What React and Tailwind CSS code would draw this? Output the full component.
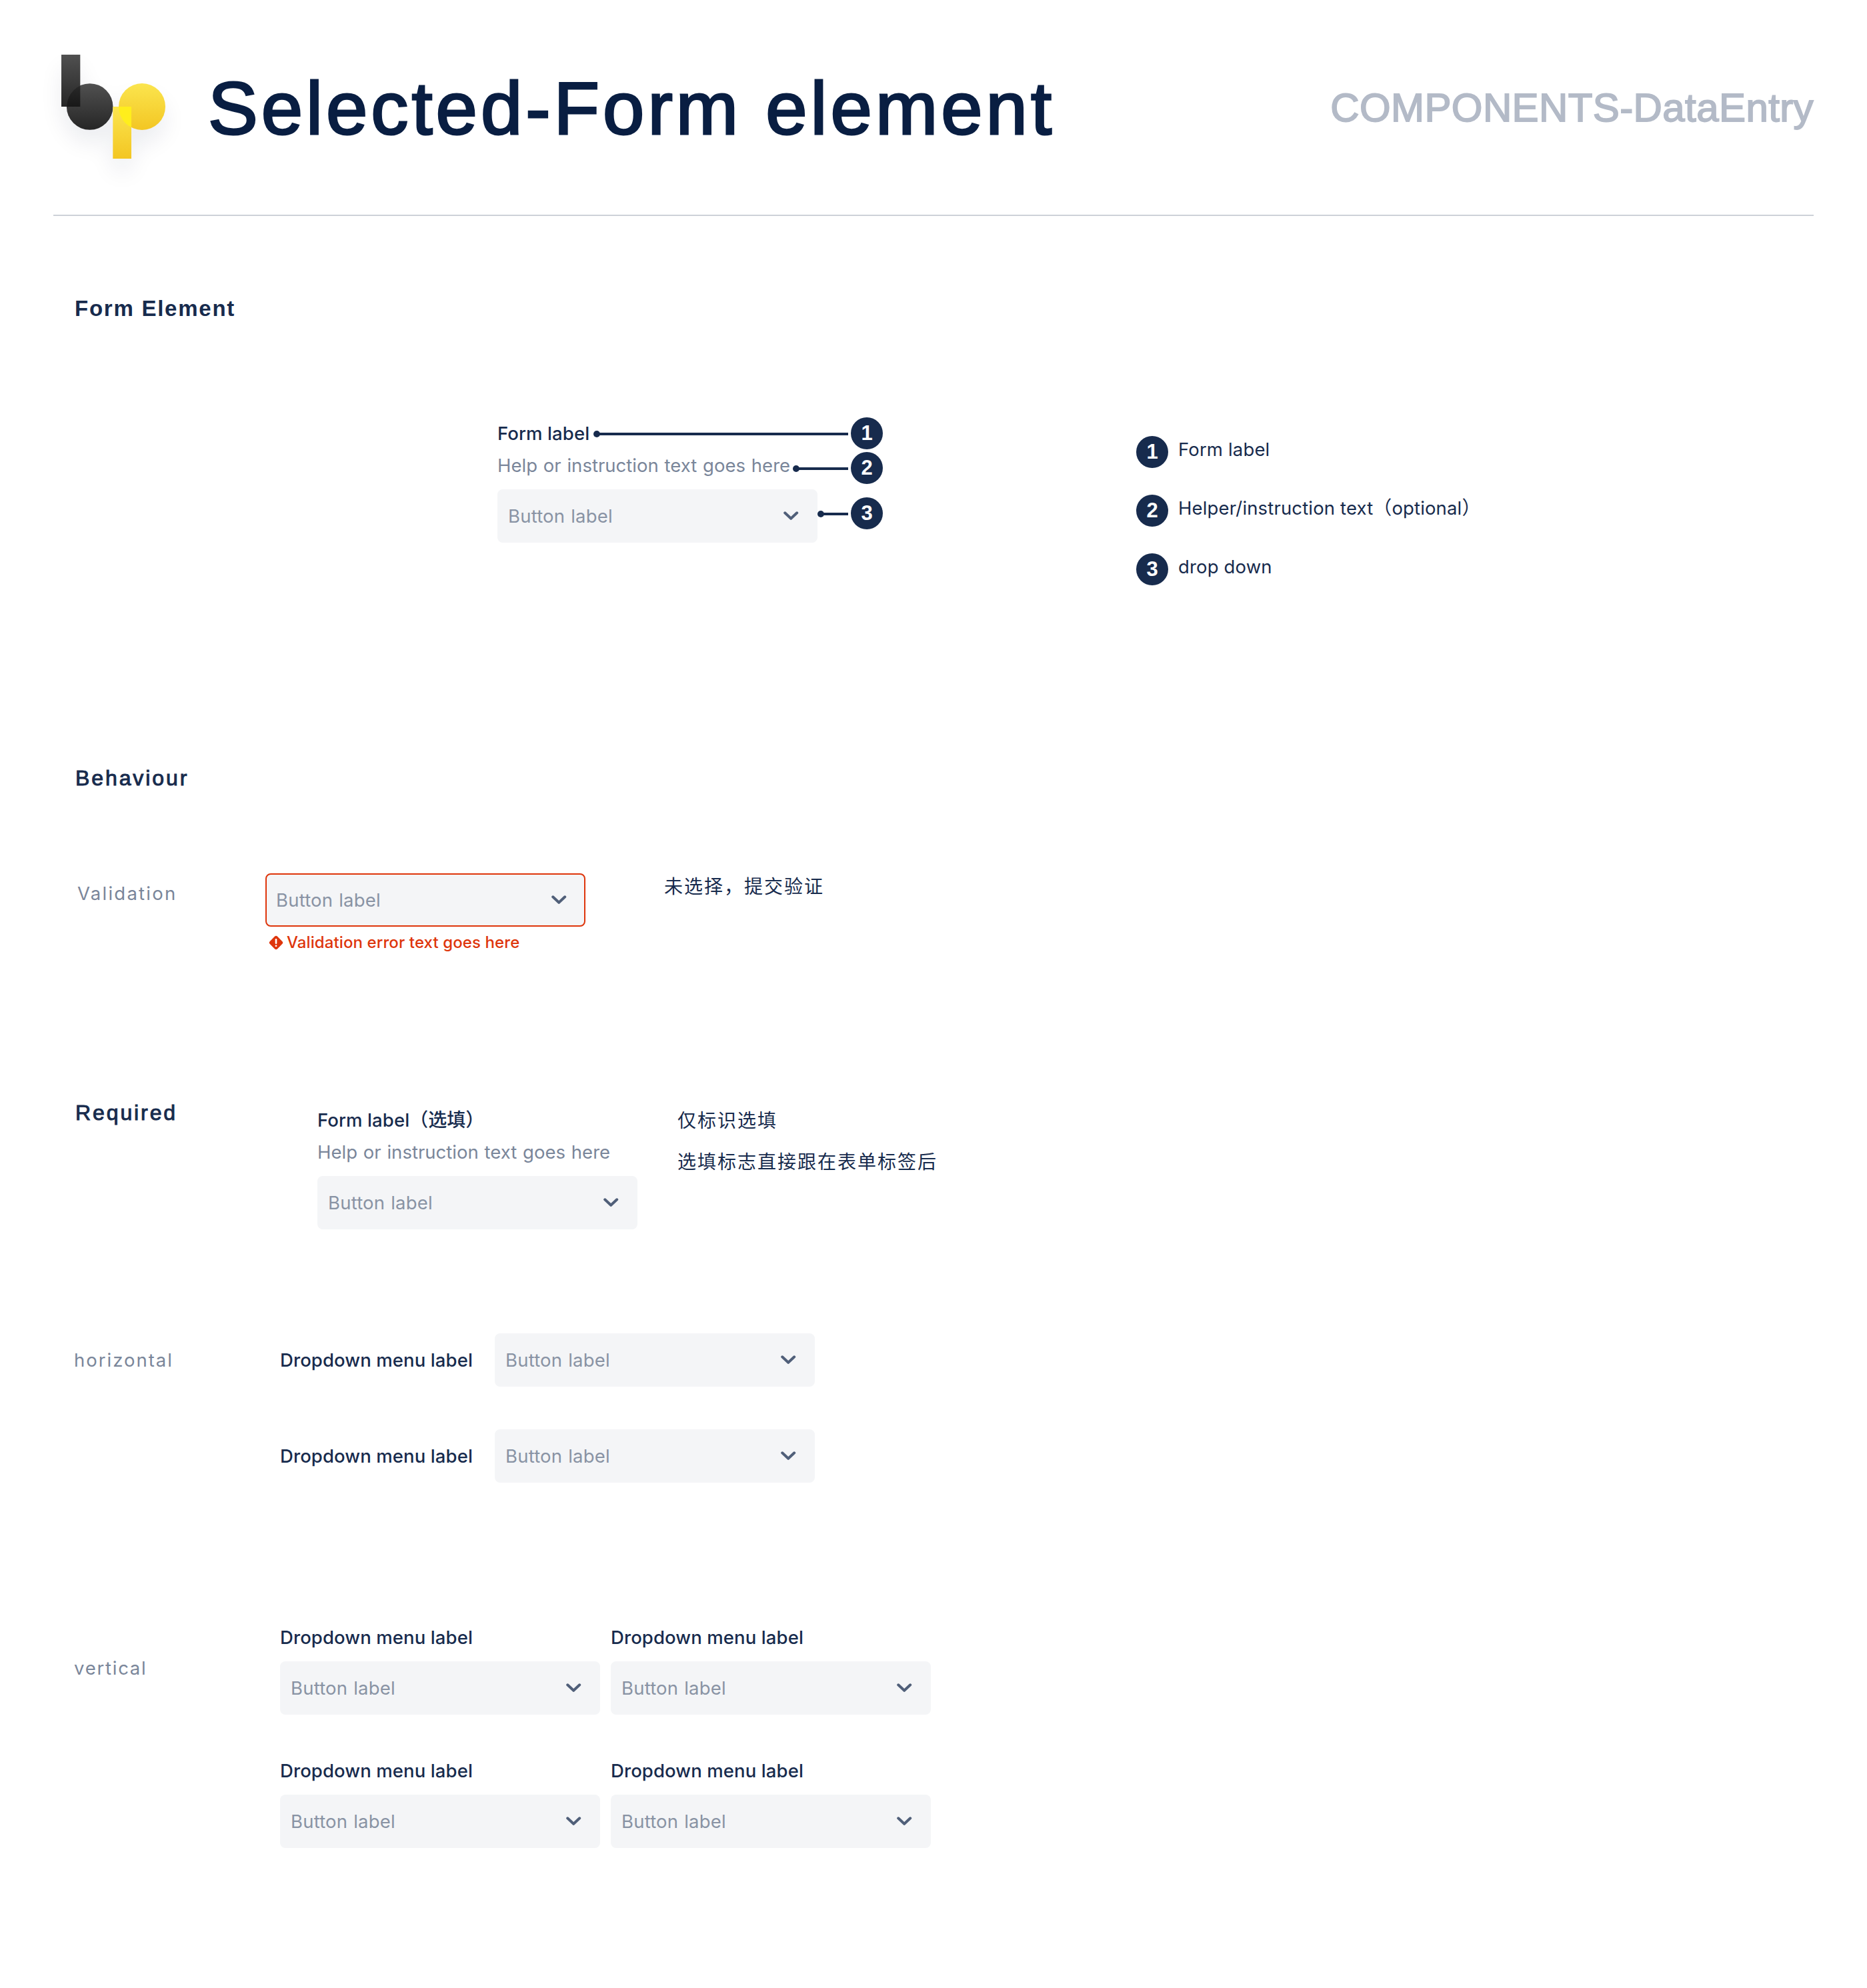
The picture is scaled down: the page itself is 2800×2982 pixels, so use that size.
import React from "react";

function Logo() {
  return (
    <svg width="156" height="156" viewBox="0 0 156 156" className="overflow-visible">
      <defs>
        <linearGradient id="dark" x1="0" y1="0" x2="0" y2="1">
          <stop offset="0" stopColor="#505050" />
          <stop offset="1" stopColor="#262626" />
        </linearGradient>
        <linearGradient id="overlapDark" x1="0" y1="0" x2="0" y2="1">
          <stop offset="0" stopColor="#2a2a2a" />
          <stop offset="1" stopColor="#181818" />
        </linearGradient>
        <linearGradient id="yellow" x1="0" y1="0" x2="0" y2="1">
          <stop offset="0" stopColor="#fbe54e" />
          <stop offset="1" stopColor="#f3c623" />
        </linearGradient>
        <clipPath id="bBowl"><circle cx="42.7" cy="78" r="34.8" /></clipPath>
        <clipPath id="pBowl"><circle cx="121" cy="78" r="35" /></clipPath>
        <filter id="soft" x="-60%" y="-60%" width="220%" height="220%">
          <feGaussianBlur stdDeviation="17" />
        </filter>
      </defs>
      <g filter="url(#soft)" fill="#0a1e42" opacity="0.075" transform="translate(0 20)">
        <rect width="28.5" height="78" />
        <circle cx="42.7" cy="78" r="34.8" />
        <rect x="77" y="78" width="28" height="78" />
        <circle cx="121" cy="78" r="35" />
      </g>
      <rect width="28.3" height="78" fill="url(#dark)" />
      <circle cx="42.7" cy="78" r="34.8" fill="url(#dark)" />
      <g clipPath="url(#bBowl)">
        <rect y="43" width="28.3" height="35" fill="url(#overlapDark)" />
      </g>
      <circle cx="121" cy="78" r="35" fill="url(#yellow)" />
      <rect x="77.3" y="78" width="27.7" height="78" fill="url(#yellow)" />
      <g clipPath="url(#pBowl)">
        <rect x="77.3" y="78" width="27.7" height="35" fill="#ffee1c" />
      </g>
    </svg>
  );
}

function Select({ error = false }) {
  return (
    <div
      className={
        error
          ? "flex h-20 w-[480px] items-center justify-between rounded-lg border-2 border-[#de350b] bg-[#f4f5f7] pl-3.5 pr-[26px]"
          : "flex h-20 w-[480px] items-center justify-between rounded-lg bg-[#f4f5f7] pl-4 pr-7"
      }
    >
      <span className="text-[27.5px] leading-10 tracking-[0.2px] text-[#8993a4] [word-spacing:1px]">Button label</span>
      <svg width="24" height="24" viewBox="0 0 24 24" fill="none" stroke="#505f79" strokeWidth="4" strokeLinecap="round" strokeLinejoin="round">
        <path d="M3.2 7.3 12.2 15.8 21.2 7.3" />
      </svg>
    </div>
  );
}

function Label({ children }) {
  return (
    <div className="whitespace-nowrap text-[27.5px] font-medium leading-10 tracking-[0.1px] text-[#172b4d]">
      {children}
    </div>
  );
}

function Help() {
  return (
    <div className="whitespace-nowrap text-[27.5px] leading-10 tracking-[0.02px] text-[#7a869a] [word-spacing:1px]">
      Help or instruction text goes here
    </div>
  );
}

function Badge({ n }) {
  return (
    <div className="h-12 w-12 shrink-0 rounded-full bg-[#172b4d] text-center font-['Liberation_Sans',sans-serif] text-[31px] font-bold leading-[48px] text-white">
      {n}
    </div>
  );
}

function Pointer({ n, width }) {
  return (
    <div className="ml-auto flex items-center gap-1">
      <div className={`flex items-center pt-0.5 ${width}`}>
        <div className="size-2.5 shrink-0 rounded-full bg-[#172b4d]" />
        <div className="-ml-1 h-1 flex-1 bg-[#172b4d]" />
      </div>
      <Badge n={n} />
    </div>
  );
}

function Heading({ children, bold = false }) {
  return (
    <h2
      className={
        bold
          ? "font-['Liberation_Sans',sans-serif] text-[33px] font-bold leading-10 tracking-[1.75px] text-[#172b4d]"
          : "pl-px font-['Liberation_Sans',sans-serif] text-[32px] leading-10 tracking-[2.9px] text-[#172b4d] [-webkit-text-stroke:1px_#172b4d]"
      }
    >
      {children}
    </h2>
  );
}

function Note({ children }) {
  return (
    <p className="whitespace-nowrap font-['Noto_Sans_CJK_SC',sans-serif] text-[28px] leading-10 tracking-[2px] text-[#172b4d]">
      {children}
    </p>
  );
}

function LegendItem({ n, children }) {
  return (
    <div className="flex h-12 items-start gap-[15px]">
      <Badge n={n} />
      <span className="whitespace-nowrap text-[27.5px] leading-10 tracking-[0.15px] text-[#172b4d]">{children}</span>
    </div>
  );
}

const cjk = "font-['Noto_Sans_CJK_SC',sans-serif] text-[28px] leading-none tracking-normal";

export default function App() {
  return (
    <div className="flex h-[2982px] w-[2800px] flex-col overflow-hidden bg-white font-['Inter','Noto_Sans_CJK_SC',sans-serif]">
      <header className="mx-20 flex h-[324px] items-start border-b-2 border-[#cdd1d8] pl-3 pt-[82px]">
        <Logo />
        <h1 className="ml-16 mt-[21px] whitespace-nowrap font-['Liberation_Sans',sans-serif] text-[112px] leading-[120px] tracking-[5.05px] text-[#091e42] [-webkit-text-stroke:3px_#091e42]">
          Selected-Form element
        </h1>
        <div className="ml-auto mt-[50px] whitespace-nowrap font-['Liberation_Sans',sans-serif] text-[60px] leading-[60px] tracking-[0.4px] text-[#b3bac7] [-webkit-text-stroke:1.8px_#b3bac7]">
          COMPONENTS-DataEntry
        </div>
      </header>

      <section className="pl-28 pt-[119px]">
        <Heading bold>Form Element</Heading>
        <div className="mt-[143px] flex items-start">
          <div className="ml-[634px] w-[578px]">
            <div className="flex h-12 items-center">
              <Label>Form label</Label>
              <Pointer n={1} width="w-[382px]" />
            </div>
            <div className="mt-1 flex h-12 items-start">
              <Help />
              <Pointer n={2} width="w-[83px]" />
            </div>
            <div className="mt-2 flex h-20 items-start">
              <Select />
              <div className="ml-auto mt-3">
                <Pointer n={3} width="w-[46px]" />
              </div>
            </div>
          </div>
          <div className="ml-[380px] mt-7 flex flex-col gap-10">
            <LegendItem n={1}>Form label</LegendItem>
            <LegendItem n={2}>
              Helper/instruction text<span className={cjk}>（</span>optional<span className={cjk}>）</span>
            </LegendItem>
            <LegendItem n={3}>drop down</LegendItem>
          </div>
        </div>
      </section>

      <section className="mt-[269px] pl-28">
        <Heading>Behaviour</Heading>
        <div className="mt-[121px] flex h-[121px] items-start">
          <div className="ml-1 mt-3 w-[282px] text-[27.5px] leading-10 tracking-[2.25px] text-[#7a869a]">Validation</div>
          <div className="mt-0.5 w-[598px]">
            <Select error />
            <div className="mt-2 flex items-start gap-[5px] pl-[5px]">
              <svg width="22" height="22" viewBox="0 0 22 22" className="mt-[5px]">
                <rect x="3" y="3" width="16" height="16" rx="3" fill="#de350b" transform="rotate(45 11 11)" />
                <rect x="9.7" y="5" width="2.6" height="8" rx="1.2" fill="#fff" />
                <circle cx="11" cy="15.8" r="1.4" fill="#fff" />
              </svg>
              <span className="whitespace-nowrap text-[24px] font-medium leading-8 tracking-[0.1px] text-[#de350b]">
                Validation error text goes here
              </span>
            </div>
          </div>
          <Note>未选择，提交验证</Note>
        </div>
      </section>

      <section className="mt-[219px] flex h-[196px] items-start pl-28">
        <div className="w-[364px] pt-px">
          <Heading>Required</Heading>
        </div>
        <div className="mt-3 w-[540px]">
          <Label>
            Form label<span className={cjk}>（选填）</span>
          </Label>
          <div className="mt-2">
            <Help />
          </div>
          <div className="mt-4">
            <Select />
          </div>
        </div>
        <div className="mt-[11px] flex flex-col gap-[22px]">
          <Note>仅标识选填</Note>
          <Note>选填标志直接跟在表单标签后</Note>
        </div>
      </section>

      <section className="mt-[156px] flex items-start pl-[111px]">
        <div className="mt-5 w-[309px] text-[27.5px] leading-10 tracking-[2px] text-[#7a869a]">horizontal</div>
        <div className="flex flex-col gap-16">
          {[0, 1].map((i) => (
            <div key={i} className="flex items-center">
              <div className="w-[322px]">
                <Label>Dropdown menu label</Label>
              </div>
              <Select />
            </div>
          ))}
        </div>
      </section>

      <section className="mt-[212px] flex items-start pl-[111px]">
        <div className="mt-[46px] w-[309px] text-[27.5px] leading-10 tracking-[1.75px] text-[#7a869a]">vertical</div>
        <div className="grid grid-cols-2 gap-x-4 gap-y-16">
          {[0, 1, 2, 3].map((i) => (
            <div key={i} className="flex flex-col gap-4">
              <Label>Dropdown menu label</Label>
              <Select />
            </div>
          ))}
        </div>
      </section>
    </div>
  );
}
